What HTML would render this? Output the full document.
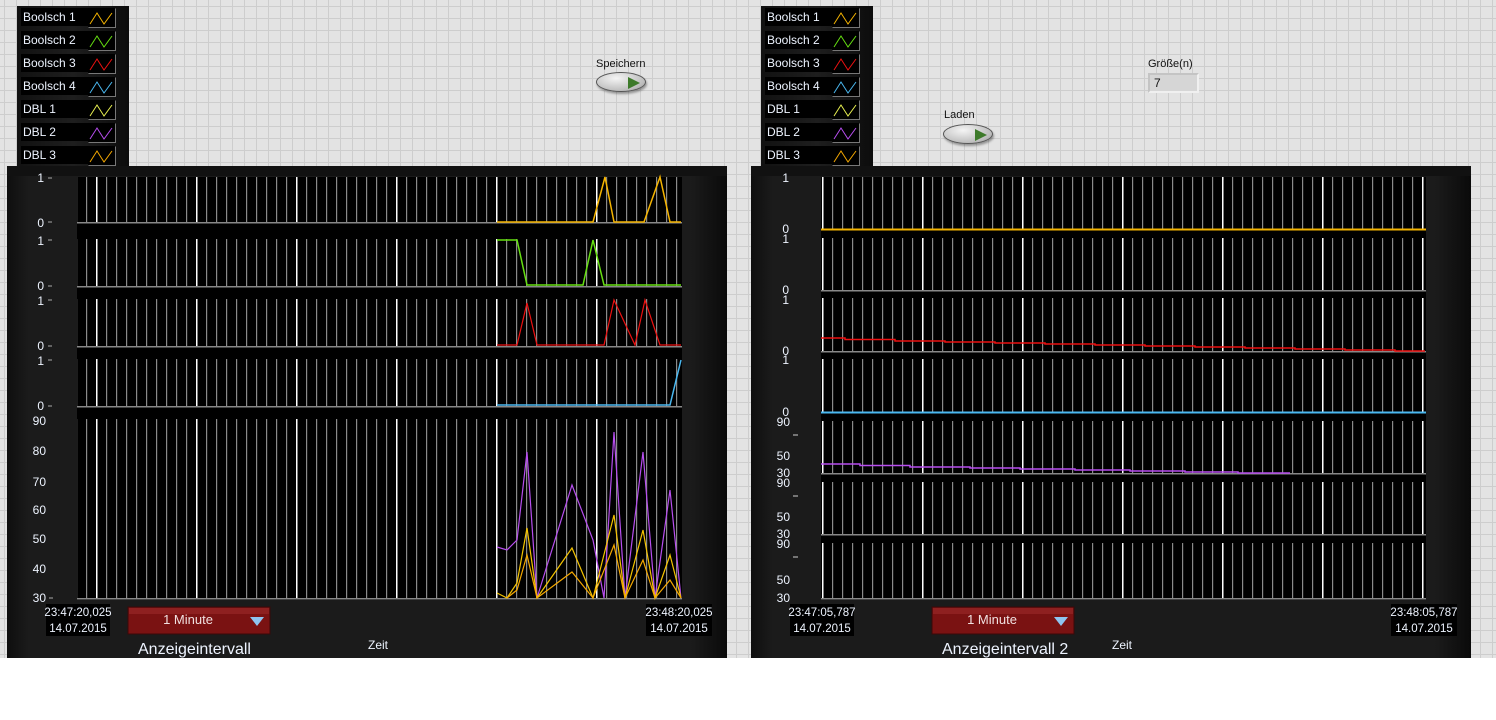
<!DOCTYPE html>
<html><head><meta charset="utf-8">
<style>
*{margin:0;padding:0;box-sizing:border-box}
body{width:1496px;height:720px;background:#fff;position:relative;overflow:hidden;font-family:"Liberation Sans",sans-serif}
.grid{position:absolute;left:0;top:0;width:1496px;height:658px;background-color:#e3e3e3;
background-image:linear-gradient(to right,#cdcdcd 1px,transparent 1px),linear-gradient(to bottom,#cdcdcd 1px,transparent 1px);
background-size:12px 12px;background-position:4px 6px}
.leg{position:absolute;top:6px;width:112px;height:161px;background:linear-gradient(to right,#111,#1e1e1e 50%,#0c0c0c)}
.row{position:absolute;left:4px;width:94px;height:18px}
.row .t{position:absolute;left:0;top:0;width:67px;height:18px;background:#000;color:#eef4ff;font-size:12px;line-height:18px;padding-left:2px}
.row svg{position:absolute;left:67px;top:0}
.lbl{position:absolute;font-size:11px;color:#111}
.btn{position:absolute;width:50px;height:20px;border-radius:50%;background:radial-gradient(ellipse at 40% 30%,#f4f4f4,#bdbdbd 70%,#8a8a8a);border:1px solid #555;box-shadow:1px 2px 2px rgba(0,0,0,.35)}
.btn:after{content:"";position:absolute;left:31px;top:4px;border-left:12px solid #3d7a2a;border-top:6px solid transparent;border-bottom:6px solid transparent}
</style></head><body>
<div class="grid"></div>

<div class="leg" style="left:17px">
<div class="row" style="top:2px"><div class="t">Boolsch 1</div><svg width="28" height="20"><rect x="0" y="0" width="27" height="19" fill="#000"/><path d="M0.5 19.5H27.5V0.5" fill="none" stroke="#777"/><polyline points="2,16 9,5 16,16 24,5" fill="none" stroke="#f5b400"/></svg></div>
<div class="row" style="top:25px"><div class="t">Boolsch 2</div><svg width="28" height="20"><rect x="0" y="0" width="27" height="19" fill="#000"/><path d="M0.5 19.5H27.5V0.5" fill="none" stroke="#777"/><polyline points="2,16 9,5 16,16 24,5" fill="none" stroke="#66e011"/></svg></div>
<div class="row" style="top:48px"><div class="t">Boolsch 3</div><svg width="28" height="20"><rect x="0" y="0" width="27" height="19" fill="#000"/><path d="M0.5 19.5H27.5V0.5" fill="none" stroke="#777"/><polyline points="2,16 9,5 16,16 24,5" fill="none" stroke="#ee1111"/></svg></div>
<div class="row" style="top:71px"><div class="t">Boolsch 4</div><svg width="28" height="20"><rect x="0" y="0" width="27" height="19" fill="#000"/><path d="M0.5 19.5H27.5V0.5" fill="none" stroke="#777"/><polyline points="2,16 9,5 16,16 24,5" fill="none" stroke="#4ab8f0"/></svg></div>
<div class="row" style="top:94px"><div class="t">DBL 1</div><svg width="28" height="20"><rect x="0" y="0" width="27" height="19" fill="#000"/><path d="M0.5 19.5H27.5V0.5" fill="none" stroke="#777"/><polyline points="2,16 9,5 16,16 24,5" fill="none" stroke="#e8f050"/></svg></div>
<div class="row" style="top:117px"><div class="t">DBL 2</div><svg width="28" height="20"><rect x="0" y="0" width="27" height="19" fill="#000"/><path d="M0.5 19.5H27.5V0.5" fill="none" stroke="#777"/><polyline points="2,16 9,5 16,16 24,5" fill="none" stroke="#b84ef0"/></svg></div>
<div class="row" style="top:140px"><div class="t">DBL 3</div><svg width="28" height="20"><rect x="0" y="0" width="27" height="19" fill="#000"/><path d="M0.5 19.5H27.5V0.5" fill="none" stroke="#777"/><polyline points="2,16 9,5 16,16 24,5" fill="none" stroke="#f5a800"/></svg></div>
</div>
<div class="leg" style="left:761px">
<div class="row" style="top:2px"><div class="t">Boolsch 1</div><svg width="28" height="20"><rect x="0" y="0" width="27" height="19" fill="#000"/><path d="M0.5 19.5H27.5V0.5" fill="none" stroke="#777"/><polyline points="2,16 9,5 16,16 24,5" fill="none" stroke="#f5b400"/></svg></div>
<div class="row" style="top:25px"><div class="t">Boolsch 2</div><svg width="28" height="20"><rect x="0" y="0" width="27" height="19" fill="#000"/><path d="M0.5 19.5H27.5V0.5" fill="none" stroke="#777"/><polyline points="2,16 9,5 16,16 24,5" fill="none" stroke="#66e011"/></svg></div>
<div class="row" style="top:48px"><div class="t">Boolsch 3</div><svg width="28" height="20"><rect x="0" y="0" width="27" height="19" fill="#000"/><path d="M0.5 19.5H27.5V0.5" fill="none" stroke="#777"/><polyline points="2,16 9,5 16,16 24,5" fill="none" stroke="#ee1111"/></svg></div>
<div class="row" style="top:71px"><div class="t">Boolsch 4</div><svg width="28" height="20"><rect x="0" y="0" width="27" height="19" fill="#000"/><path d="M0.5 19.5H27.5V0.5" fill="none" stroke="#777"/><polyline points="2,16 9,5 16,16 24,5" fill="none" stroke="#4ab8f0"/></svg></div>
<div class="row" style="top:94px"><div class="t">DBL 1</div><svg width="28" height="20"><rect x="0" y="0" width="27" height="19" fill="#000"/><path d="M0.5 19.5H27.5V0.5" fill="none" stroke="#777"/><polyline points="2,16 9,5 16,16 24,5" fill="none" stroke="#e8f050"/></svg></div>
<div class="row" style="top:117px"><div class="t">DBL 2</div><svg width="28" height="20"><rect x="0" y="0" width="27" height="19" fill="#000"/><path d="M0.5 19.5H27.5V0.5" fill="none" stroke="#777"/><polyline points="2,16 9,5 16,16 24,5" fill="none" stroke="#b84ef0"/></svg></div>
<div class="row" style="top:140px"><div class="t">DBL 3</div><svg width="28" height="20"><rect x="0" y="0" width="27" height="19" fill="#000"/><path d="M0.5 19.5H27.5V0.5" fill="none" stroke="#777"/><polyline points="2,16 9,5 16,16 24,5" fill="none" stroke="#f5a800"/></svg></div>
</div>

<div class="lbl" style="left:596px;top:58px">Speichern</div>
<div class="btn" style="left:596px;top:72px"></div>
<div class="lbl" style="left:944px;top:109px">Laden</div>
<div class="btn" style="left:943px;top:124px"></div>
<div class="lbl" style="left:1148px;top:58px">Größe(n)</div>
<div style="position:absolute;left:1148px;top:73px;width:51px;height:20px;background:#d6d6d6;border:2px solid #c4c4c4;border-right-color:#f0f0f0;border-bottom-color:#f0f0f0;font-size:12px;line-height:16px;padding-left:4px;color:#111">7</div>

<svg style="position:absolute;left:0;top:0" width="1496" height="720" font-family="Liberation Sans, sans-serif">
<defs>
<pattern id="gL" x="76" y="0" width="10" height="720" patternUnits="userSpaceOnUse"><rect x="0" y="0" width="1.2" height="720" fill="#8a8a8a"/></pattern>
<pattern id="wL" x="96" y="0" width="100" height="720" patternUnits="userSpaceOnUse"><rect x="0" y="0" width="1.5" height="720" fill="#fff"/></pattern>
<pattern id="gR" x="822" y="0" width="10" height="720" patternUnits="userSpaceOnUse"><rect x="0" y="0" width="1.2" height="720" fill="#8a8a8a"/></pattern>
<pattern id="wR" x="922" y="0" width="100" height="720" patternUnits="userSpaceOnUse"><rect x="0" y="0" width="1.5" height="720" fill="#fff"/></pattern>
<linearGradient id="pg" x1="0" x2="1"><stop offset="0" stop-color="#0e0e0e"/><stop offset="0.03" stop-color="#1b1b1b"/><stop offset="0.95" stop-color="#1b1b1b"/><stop offset="1" stop-color="#0a0a0a"/></linearGradient>
</defs>

<!-- LEFT PANEL -->
<rect x="7" y="166" width="720" height="492" fill="url(#pg)"/>
<rect x="7" y="166" width="720" height="10" fill="#111"/>
<rect x="77" y="177" width="605" height="423" fill="#000"/>
<g>
<rect x="77" y="177" width="605" height="45" fill="url(#gL)"/><rect x="77" y="177" width="605" height="45" fill="url(#wL)"/>
<rect x="77" y="239" width="605" height="47" fill="url(#gL)"/><rect x="77" y="239" width="605" height="47" fill="url(#wL)"/>
<rect x="77" y="299" width="605" height="47" fill="url(#gL)"/><rect x="77" y="299" width="605" height="47" fill="url(#wL)"/>
<rect x="77" y="359" width="605" height="47" fill="url(#gL)"/><rect x="77" y="359" width="605" height="47" fill="url(#wL)"/>
<rect x="77" y="419" width="605" height="179" fill="url(#gL)"/><rect x="77" y="419" width="605" height="179" fill="url(#wL)"/>
<g fill="#888"><rect x="77" y="222" width="605" height="1.5"/><rect x="77" y="286" width="605" height="1.5"/><rect x="77" y="346" width="605" height="1.5"/><rect x="77" y="406" width="605" height="1.5"/><rect x="77" y="598" width="605" height="1.5"/></g>
</g>
<g fill="none" stroke-width="1.5">
<polyline stroke="#f5b400" points="497,222 593,222 605,177 614,222 644,222 660,177 670,222 681,222"/>
<polyline stroke="#66e011" points="497,240 517,240 527,285 583,285 593,240 604,285 681,285"/>
<polyline stroke="#ee1111" stroke-width="1.2" points="497,345 517,345 527,303 537,345 604,345 614,300 635,345 645,300 660,345 681,345"/>
<polyline stroke="#4ab8f0" points="497,405 670,405 681,360"/>
<polyline stroke="#b84ef0" stroke-width="1.2" points="497,547 507,550 517,540 527,452 537,598 572,485 593,540 604,598 614,432 625,598 643,452 655,598 670,490 681,598"/>
<polyline stroke="#f5c400" stroke-width="1.2" points="497,593 507,598 517,583 527,528 537,598 572,548 593,598 614,515 625,598 643,530 655,598 670,555 681,598"/>
<polyline stroke="#f5a800" stroke-width="1.2" points="507,598 517,590 527,555 537,598 572,572 593,598 614,545 625,598 643,560 655,598 670,580 681,598"/>
</g>
<g fill="#eef4ff" font-size="12" text-anchor="end">
<text x="44" y="182">1</text><text x="44" y="227">0</text>
<text x="44" y="245">1</text><text x="44" y="290">0</text>
<text x="44" y="305">1</text><text x="44" y="350">0</text>
<text x="44" y="365">1</text><text x="44" y="410">0</text>
<text x="46" y="425">90</text><text x="46" y="455">80</text><text x="46" y="486">70</text><text x="46" y="514">60</text><text x="46" y="543">50</text><text x="46" y="573">40</text><text x="46" y="602">30</text>
</g>
<g stroke="#aaa"><line x1="48" y1="178" x2="52" y2="178"/><line x1="48" y1="222" x2="52" y2="222"/><line x1="48" y1="240" x2="52" y2="240"/><line x1="48" y1="286" x2="52" y2="286"/><line x1="48" y1="300" x2="52" y2="300"/><line x1="48" y1="346" x2="52" y2="346"/><line x1="48" y1="360" x2="52" y2="360"/><line x1="48" y1="406" x2="52" y2="406"/><line x1="49" y1="598" x2="53" y2="598"/></g>
<rect x="46" y="604" width="64" height="32" fill="#000"/>
<text x="78" y="616" fill="#eef4ff" font-size="11.5" text-anchor="middle">23:47:20,025</text>
<text x="78" y="632" fill="#eef4ff" font-size="11.5" text-anchor="middle">14.07.2015</text>
<rect x="646" y="604" width="66" height="32" fill="#000"/>
<text x="679" y="616" fill="#eef4ff" font-size="11.5" text-anchor="middle">23:48:20,025</text>
<text x="679" y="632" fill="#eef4ff" font-size="11.5" text-anchor="middle">14.07.2015</text>
<rect x="128" y="607" width="142" height="27" fill="#7a1212" stroke="#3a0808"/>
<rect x="129" y="608" width="140" height="6" fill="#8e2020"/>
<text x="188" y="624" fill="#f0e0e0" font-size="13" text-anchor="middle">1 Minute</text>
<polygon points="250,617 264,617 257,626" fill="#8ec4f0"/>
<text x="138" y="654" fill="#eef4ff" font-size="16">Anzeigeintervall</text>
<text x="368" y="649" fill="#eef4ff" font-size="12">Zeit</text>

<!-- RIGHT PANEL -->
<rect x="751" y="166" width="720" height="492" fill="url(#pg)"/>
<rect x="751" y="166" width="720" height="10" fill="#111"/>
<rect x="821" y="177" width="605" height="423" fill="#000"/>
<g>
<rect x="821" y="177" width="605" height="421" fill="url(#gR)"/><rect x="821" y="177" width="605" height="421" fill="url(#wR)"/>
<g fill="#000"><rect x="821" y="230" width="605" height="8"/><rect x="821" y="291" width="605" height="7"/><rect x="821" y="352" width="605" height="7"/><rect x="821" y="413" width="605" height="8"/><rect x="821" y="474" width="605" height="8"/><rect x="821" y="535" width="605" height="8"/></g>
<g fill="#888"><rect x="821" y="290" width="605" height="1.5"/><rect x="821" y="351" width="605" height="1.5"/><rect x="821" y="473" width="605" height="1.5"/><rect x="821" y="534" width="605" height="1.5"/><rect x="821" y="598" width="605" height="1.5"/></g>
<rect x="821" y="228.5" width="605" height="2" fill="#f5b400"/>
<rect x="821" y="411.5" width="605" height="2" fill="#4ab8f0"/>
</g>
<g fill="none" stroke-width="1.5">
<polyline stroke="#ee1111" points="821,338 845,338 845,339.5 895,339.5 895,341 945,341 945,342 995,342 995,343 1045,343 1045,344 1095,344 1095,345 1145,345 1145,346 1195,346 1195,347 1245,347 1245,348 1295,348 1295,349 1345,349 1345,350 1395,350 1395,351 1425,351"/>
<polyline stroke="#b84ef0" points="821,464 860,464 860,465.5 910,465.5 910,467 970,467 970,468 1020,468 1020,469 1075,469 1075,470 1130,470 1130,471 1185,471 1185,472 1238,472 1238,473 1290,473"/>
</g>
<g fill="#eef4ff" font-size="12" text-anchor="end">
<text x="789" y="182">1</text><text x="789" y="233">0</text>
<text x="789" y="243">1</text><text x="789" y="294">0</text>
<text x="789" y="304">1</text><text x="789" y="355">0</text>
<text x="789" y="364">1</text><text x="789" y="416">0</text>
<text x="790" y="426">90</text><text x="790" y="460">50</text><text x="790" y="477">30</text>
<text x="790" y="487">90</text><text x="790" y="521">50</text><text x="790" y="538">30</text>
<text x="790" y="548">90</text><text x="790" y="584">50</text><text x="790" y="602">30</text>
</g>
<g stroke="#ccc"><line x1="793" y1="435" x2="798" y2="435"/><line x1="793" y1="496" x2="798" y2="496"/><line x1="793" y1="557" x2="798" y2="557"/></g>
<rect x="790" y="604" width="64" height="32" fill="#000"/>
<text x="822" y="616" fill="#eef4ff" font-size="11.5" text-anchor="middle">23:47:05,787</text>
<text x="822" y="632" fill="#eef4ff" font-size="11.5" text-anchor="middle">14.07.2015</text>
<rect x="1391" y="604" width="66" height="32" fill="#000"/>
<text x="1424" y="616" fill="#eef4ff" font-size="11.5" text-anchor="middle">23:48:05,787</text>
<text x="1424" y="632" fill="#eef4ff" font-size="11.5" text-anchor="middle">14.07.2015</text>
<rect x="932" y="607" width="142" height="27" fill="#7a1212" stroke="#3a0808"/>
<rect x="933" y="608" width="140" height="6" fill="#8e2020"/>
<text x="992" y="624" fill="#f0e0e0" font-size="13" text-anchor="middle">1 Minute</text>
<polygon points="1054,617 1068,617 1061,626" fill="#8ec4f0"/>
<text x="942" y="654" fill="#eef4ff" font-size="16">Anzeigeintervall 2</text>
<text x="1112" y="649" fill="#eef4ff" font-size="12">Zeit</text>
</svg>
</body></html>
